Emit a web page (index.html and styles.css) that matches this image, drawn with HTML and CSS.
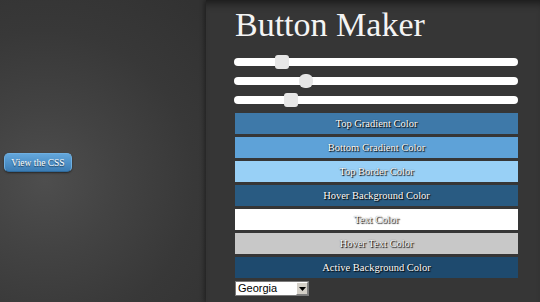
FILE: index.html
```html
<!DOCTYPE html>
<html>
<head>
<meta charset="utf-8">
<link rel="stylesheet" href="styles.css">
</head>
<body>
<div class="page">
  <aside class="sidebar">
    <button class="css-btn">View the CSS</button>
  </aside>
  <main class="panel">
    <h1 class="title">Button Maker</h1>
    <div class="sliders">
      <input class="slider" type="range" min="0" max="100" value="15">
      <input class="slider slider-round" type="range" min="0" max="100" value="24">
      <input class="slider" type="range" min="0" max="100" value="18.5" step="0.5">
    </div>
    <div class="colors">
      <div class="color c-top">Top Gradient Color</div>
      <div class="color c-bottom">Bottom Gradient Color</div>
      <div class="color c-border">Top Border Color</div>
      <div class="color c-hover">Hover Background Color</div>
      <div class="color c-text">Text Color</div>
      <div class="color c-hovertext">Hover Text Color</div>
      <div class="color c-active">Active Background Color</div>
      <div class="select-box">
        <select class="font-select"><option>Georgia</option></select>
        <span class="select-arrow"><svg width="7" height="4" viewBox="0 0 7 4"><path d="M0 0h7L3.5 4z" fill="#000"/></svg></span>
      </div>
    </div>
  </main>
</div>
</body>
</html>
```
FILE: styles.css
```css
html, body {
  margin: 0;
  padding: 0;
  background: #333;
}
.page {
  display: flex;
  width: 540px;
  height: 302px;
  overflow: hidden;
  background: radial-gradient(circle at 45px 180px, #4e4e4e 0, #434343 70px, #383838 150px, #323232 230px);
}
.sidebar {
  width: 206px;
  flex: none;
  padding: 153px 0 0 4px;
  box-sizing: border-box;
}
.css-btn {
  display: block;
  width: 68px;
  height: 19px;
  margin: 0;
  padding: 0;
  border: 1px solid #6fb0e2;
  border-bottom-color: #2f6a9b;
  border-radius: 5px;
  background: linear-gradient(#63a7dc, #3c7db5);
  color: #fff;
  font-family: "Liberation Serif", serif;
  font-size: 9.5px;
  text-shadow: 0 1px 1px rgba(0,0,0,0.6);
  box-shadow: 0 1px 2px rgba(0,0,0,0.5);
  box-sizing: border-box;
}
.panel {
  flex: 1;
  background: #363636;
  padding: 8px 0 0 29px;
  box-shadow: -2px 0 4px rgba(0,0,0,0.35), inset 0 9px 9px -6px rgba(0,0,0,0.55);
}
.title {
  margin: 0;
  font-family: "Liberation Serif", serif;
  font-weight: normal;
  font-size: 34px;
  line-height: 34px;
  color: #f4f4f4;
}
.sliders {
  margin-top: 10px;
  width: 284px;
  margin-left: -1px;
}
.slider {
  -webkit-appearance: none;
  appearance: none;
  display: block;
  width: 284px;
  height: 19px;
  margin: 0;
  background: transparent;
}
.slider::-webkit-slider-runnable-track {
  height: 8px;
  border-radius: 4px;
  background: #fff;
}
.slider::-webkit-slider-thumb {
  -webkit-appearance: none;
  width: 14px;
  height: 14px;
  margin-top: -3px;
  border-radius: 3px;
  background: #e6e6e6;
  border: none;
}
.slider-round::-webkit-slider-thumb {
  border-radius: 6px;
}
.colors {
  margin-top: 4px;
  display: flex;
  flex-direction: column;
  gap: 3px;
  width: 283px;
}
.color {
  height: 21px;
  line-height: 21px;
  text-align: center;
  font-family: "Liberation Serif", serif;
  font-size: 10.5px;
  color: #fff;
  text-shadow: 1px 1px 1px #000, 0 0 1px rgba(0,0,0,0.6);
}
.c-top { background: #3e79a9; }
.c-bottom { background: #5ea2d8; }
.c-border { background: #98d0f6; }
.c-hover { background: #295b82; }
.c-text { background: #ffffff; }
.c-hovertext { background: #c8c8c8; }
.c-active { background: #1e4a6e; }
.select-box {
  display: flex;
  width: 74px;
  height: 15px;
  box-sizing: border-box;
  border: 1px solid #7a7a7a;
  background: #fff;
}
.font-select {
  -webkit-appearance: none;
  appearance: none;
  flex: 1;
  min-width: 0;
  border: none;
  margin: 0;
  padding: 0 0 0 2px;
  height: 13px;
  font-family: "Liberation Sans", Arial, sans-serif;
  font-size: 11px;
  line-height: 13px;
  background: #fff;
  color: #000;
  outline: none;
}
.select-arrow {
  width: 12px;
  height: 13px;
  flex: none;
  box-sizing: border-box;
  border: 1px solid;
  border-color: #fff #808080 #808080 #fff;
  background: #d4d0c8;
  display: flex;
  align-items: center;
  justify-content: center;
}
```
